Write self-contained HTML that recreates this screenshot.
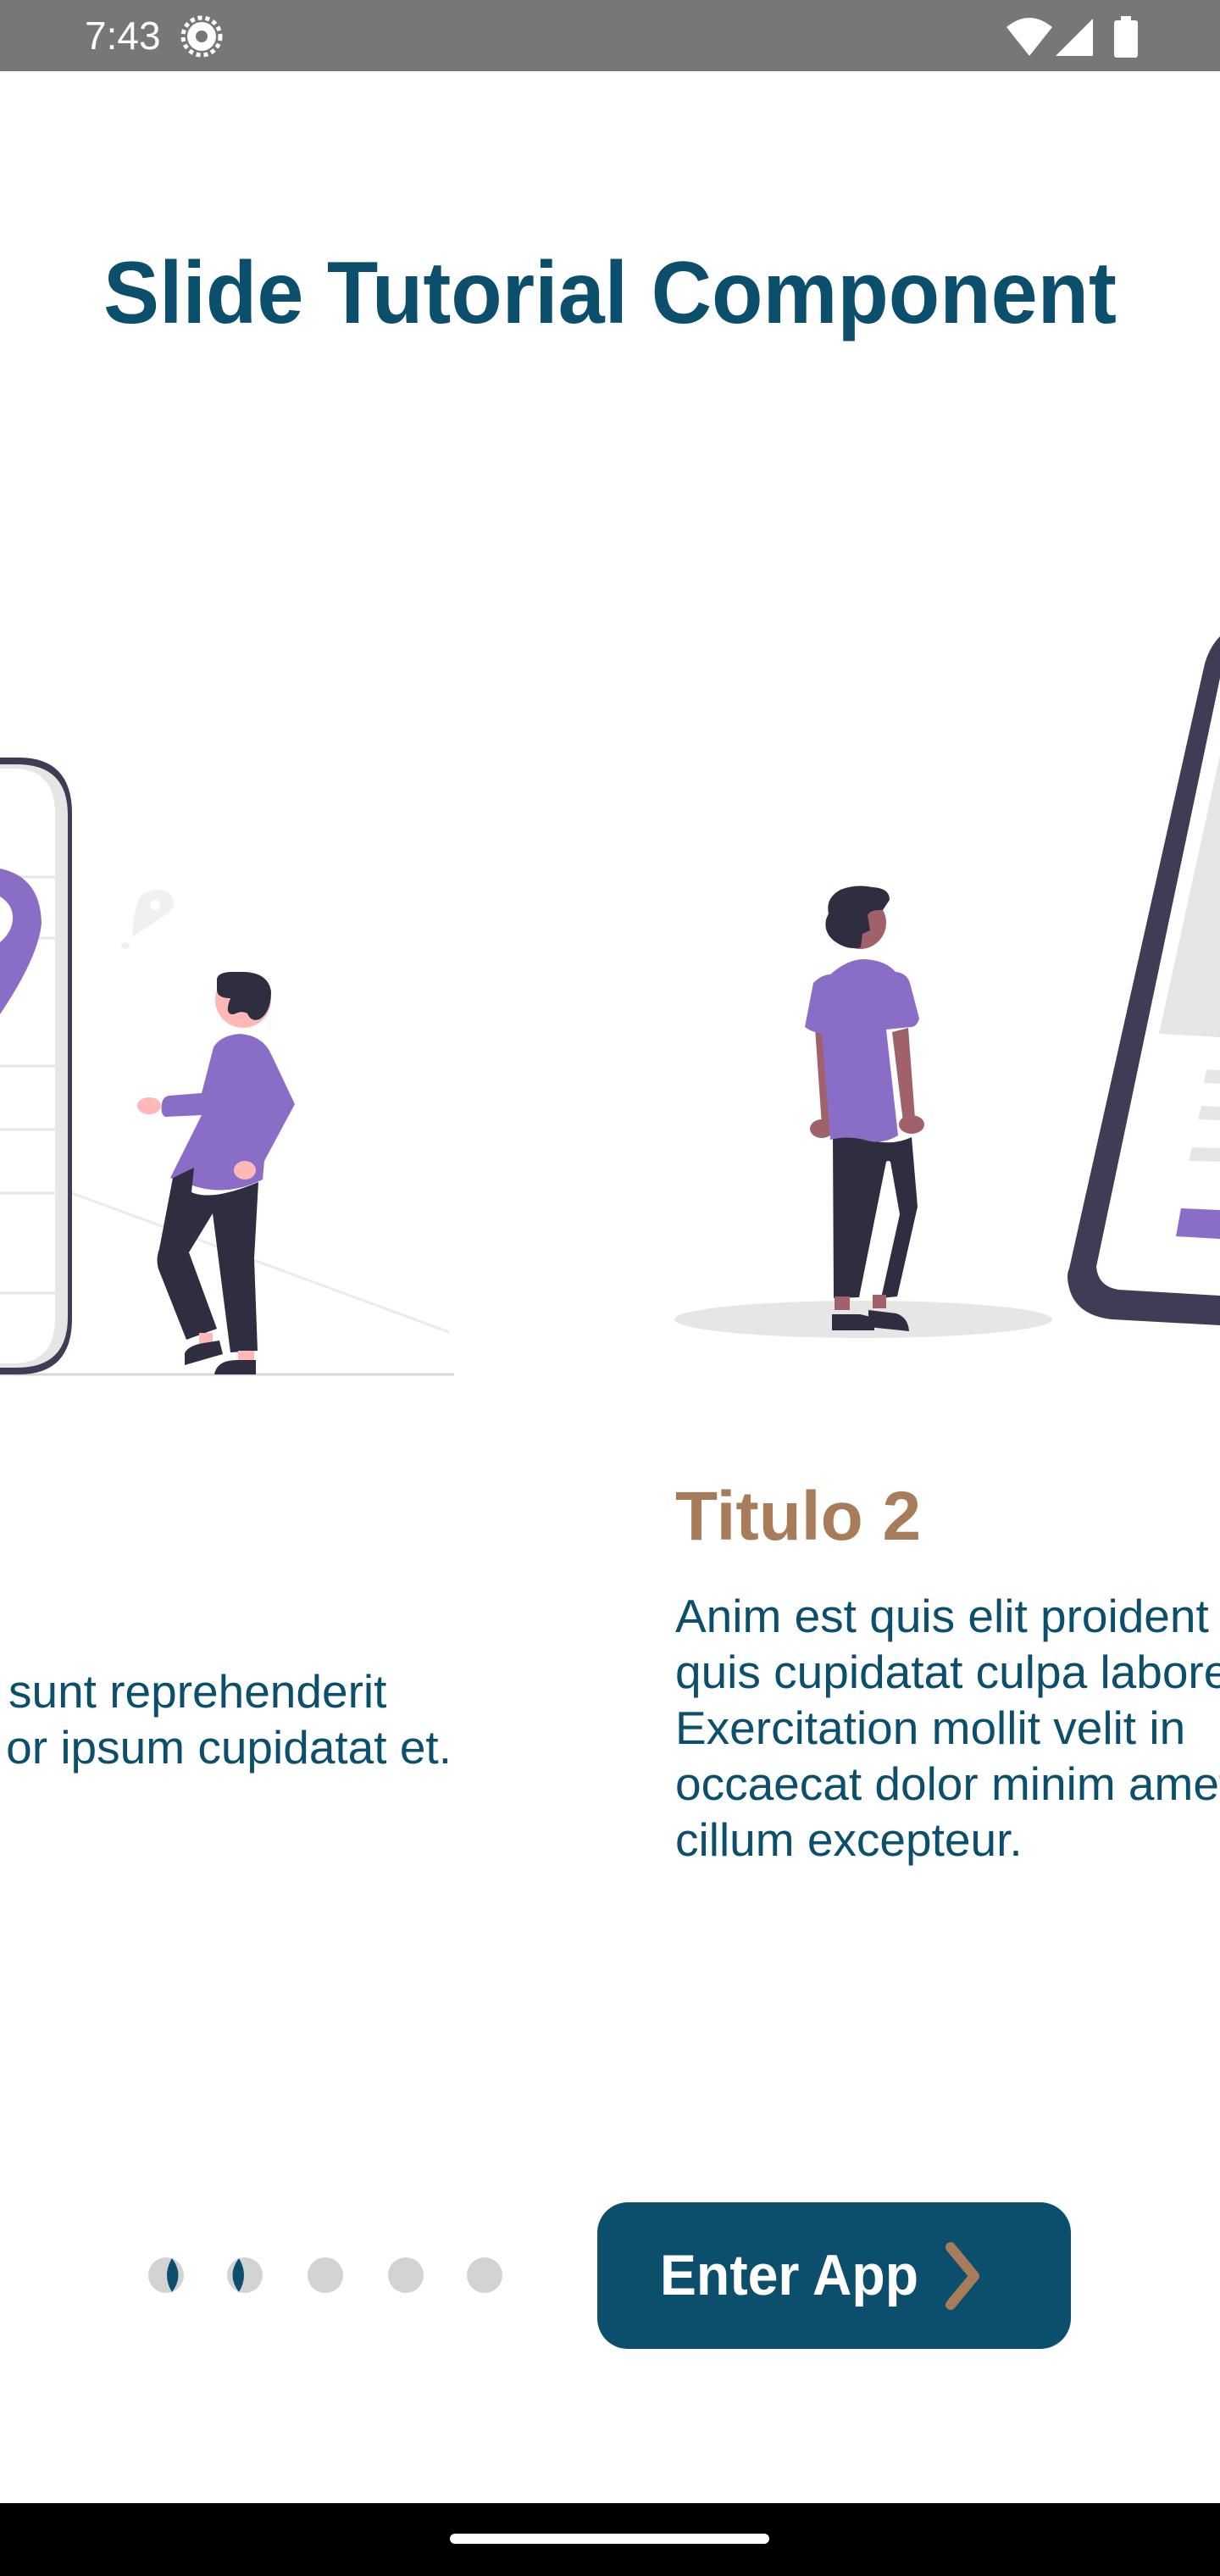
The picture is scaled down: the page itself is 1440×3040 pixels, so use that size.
<!DOCTYPE html>
<html><head><meta charset="utf-8"><style>
html,body{margin:0;padding:0;width:1440px;height:3040px;overflow:hidden;background:#fff;font-family:"Liberation Sans",sans-serif}
.abs{position:absolute}
.body{color:#0b4f6c;font-size:55px;line-height:66px;white-space:nowrap}
</style></head><body>
<div class="abs" style="left:0;top:0;width:1440px;height:84px;background:#777"></div>
<div class="abs" style="left:100px;top:16px;color:#fff;font-size:46px;line-height:52px">7:43</div>
<svg class="abs" style="left:0;top:0" width="1440" height="3040" viewBox="0 0 1440 3040">
  <g fill="#fff">
    <circle cx="238" cy="43" r="17"/>
    <circle cx="238" cy="43" r="22" fill="none" stroke="#fff" stroke-width="5" stroke-dasharray="5 4"/>
    <circle cx="238" cy="43" r="7" fill="#777"/>
    <path d="M1188 32 Q1215 10 1242 32 L1215 66 Z"/>
    <path d="M1246 66 L1290 22 L1290 66 Z"/>
    <rect x="1315" y="24" width="28" height="44" rx="3"/>
    <rect x="1323" y="19" width="12" height="6"/>
  </g>
  <text x="720" y="381" text-anchor="middle" textLength="1196" lengthAdjust="spacingAndGlyphs" font-family="Liberation Sans, sans-serif" font-weight="bold" font-size="104" fill="#0b4f6c">Slide Tutorial Component</text>

  <line x1="85" y1="1408" x2="530" y2="1572" stroke="#ebebeb" stroke-width="3"/>
  <line x1="0" y1="1622" x2="536" y2="1622" stroke="#d6d6d6" stroke-width="3"/>
  <path d="M0 894 L22 894 Q85 894 85 960 L85 1556 Q85 1622 22 1622 L0 1622 Z" fill="#3f3d56"/>
  <path d="M0 902 L20 902 Q80 902 80 962 L80 1554 Q80 1614 20 1614 L0 1614 Z" fill="#e6e6e6"/>
  <path d="M0 907 L15 907 Q65 907 65 960 L65 1556 Q65 1609 15 1609 L0 1609 Z" fill="#fff"/>
  <g stroke="#e6e6e6" stroke-width="3">
    <line x1="0" y1="1035" x2="65" y2="1035"/><line x1="0" y1="1107" x2="65" y2="1107"/>
    <line x1="0" y1="1258" x2="65" y2="1258"/><line x1="0" y1="1333" x2="65" y2="1333"/>
    <line x1="0" y1="1408" x2="65" y2="1408"/><line x1="0" y1="1526" x2="65" y2="1526"/>
  </g>
  <path d="M0 1025 Q48 1035 49 1090 Q45 1130 0 1197 Z" fill="#8a6dc6"/>
  <path d="M0 1058 Q16 1068 15 1085 Q14 1100 0 1112 Z" fill="#fff"/>
  <path d="M156 1106 Q158 1065 168 1056 Q185 1044 200 1055 Q212 1068 195 1080 Q180 1090 156 1106Z" fill="#f0f0f0"/>
  <circle cx="183" cy="1068" r="6" fill="#fff"/>
  <ellipse cx="148" cy="1116" rx="5" ry="4" fill="#f0f0f0"/>
  <circle cx="287" cy="1180" r="33" fill="#ffb8b8"/>
  <path d="M256 1155 Q258 1146 280 1147 Q316 1145 320 1170 Q320 1195 306 1203 Q296 1206 292 1196 Q285 1192 276 1197 Q264 1198 272 1178 Q256 1178 256 1168Z" fill="#2f2e41"/>
  <path d="M252 1236 Q260 1222 283 1220 Q310 1222 320 1244 L348 1303 L312 1370 L310 1392 Q270 1412 230 1400 L201 1390 L238 1316 L195 1318 Q189 1315 191 1303 Q192 1294 200 1293 L238 1290 Z" fill="#8a6dc6"/>
  <ellipse cx="176" cy="1305" rx="14" ry="10" fill="#ffb8b8"/>
  <ellipse cx="289" cy="1381" rx="13" ry="11" fill="#ffb8b8"/>
  <path d="M204 1390 L229 1378 L226 1407 Q250 1418 305 1395 L300 1485 L304 1594 L272 1596 L251 1432 L223 1478 L256 1568 L220 1581 L188 1500 Q183 1488 188 1474 Z" fill="#2f2e41"/>
  <rect x="235" y="1573" width="16" height="14" fill="#ffb8b8"/>
  <rect x="281" y="1594" width="19" height="12" fill="#ffb8b8"/>
  <path d="M218 1597 Q222 1588 240 1585 L259 1582 L263 1598 L218 1611Z" fill="#2f2e41"/>
  <path d="M253 1622 Q256 1605 280 1605 L302 1605 L302 1622Z" fill="#2f2e41"/>

  <ellipse cx="1019" cy="1557" rx="223" ry="22" fill="#e6e6e6"/>
  <path d="M962 1213 L980 1212 L984 1325 L970 1328 Z" fill="#a0616a"/>
  <path d="M1072 1213 L1080 1320 L1066 1324 L1053 1218Z" fill="#a0616a"/>
  <ellipse cx="970" cy="1332" rx="14" ry="11" fill="#a0616a"/>
  <ellipse cx="1076" cy="1327" rx="15" ry="11" fill="#a0616a"/>
  <path d="M983 1340 Q1010 1338 1030 1346 Q1055 1352 1076 1342 L1083 1424 L1059 1530 L1040 1532 L1062 1433 L1051 1371 Q1048 1369 1046 1371 L1014 1531 L984 1532 Z" fill="#2f2e41"/>
  <rect x="985" y="1530" width="18" height="16" fill="#a0616a"/>
  <rect x="1030" y="1528" width="16" height="16" fill="#a0616a"/>
  <path d="M982 1551 L1015 1551 L1032 1555 L1032 1570 L982 1570Z" fill="#2f2e41"/>
  <path d="M1025 1546 L1058 1550 Q1072 1555 1073 1571 L1025 1566Z" fill="#2f2e41"/>
  <circle cx="1015" cy="1089" r="31" fill="#a0616a"/>
  <path d="M978 1078 Q974 1060 992 1050 Q1010 1043 1030 1047 Q1050 1048 1050 1062 L1042 1074 Q1028 1073 1024 1080 L1027 1098 L1018 1102 L1016 1118 Q1000 1122 984 1110 Q972 1100 975 1085Z" fill="#2f2e41"/>
  <path d="M960 1160 Q970 1150 980 1150 Q1000 1132 1020 1132 Q1045 1133 1057 1147 Q1070 1148 1074 1160 L1085 1202 Q1082 1212 1075 1212 L1046 1215 L1060 1340 Q1040 1352 1020 1345 Q1000 1340 980 1345 L970 1220 Q958 1218 950 1212 Z" fill="#8a6dc6"/>
  <path d="M1440 751 L1440 1564 L1312 1557 Q1270 1552 1262 1520 Q1258 1505 1262 1497 L1422 783 Q1428 763 1440 751Z" fill="#3f3d56"/>
  <path d="M1440 800 L1440 1529 L1320 1522 Q1296 1518 1294 1495 L1440 800Z" fill="#fff"/>
  <path d="M1440 891 L1440 1224 L1368 1220 Z" fill="#e6e6e6"/>
  <g fill="#e6e6e6">
    <path d="M1424 1262 L1440 1263 L1440 1279 L1421 1278Z"/>
    <path d="M1418 1305 L1440 1306 L1440 1322 L1414 1321Z"/>
    <path d="M1407 1354 L1440 1355 L1440 1371 L1403 1370Z"/>
  </g>
  <path d="M1394 1426 L1440 1428 L1440 1462 L1388 1459Z" fill="#8a6dc6"/>

  <g fill="#d3d3d3">
    <circle cx="196" cy="2685" r="21"/><circle cx="289" cy="2685" r="21"/>
    <circle cx="384" cy="2685" r="21"/><circle cx="479" cy="2685" r="21"/><circle cx="572" cy="2685" r="21"/>
  </g>
  <path d="M203 2665 Q218 2685 203 2705 Q191 2685 203 2665Z" fill="#0b4f6c"/>
  <path d="M282 2665 Q267 2685 282 2705 Q294 2685 282 2665Z" fill="#0b4f6c"/>

  <rect x="705" y="2599" width="559" height="173" rx="36" fill="#0b4f6c"/>
  <text x="779" y="2708" textLength="305" lengthAdjust="spacingAndGlyphs" font-family="Liberation Sans, sans-serif" font-weight="bold" font-size="68" fill="#fff">Enter App</text>
  <path d="M1122 2652 L1150 2686 L1122 2720" fill="none" stroke="#a67c5b" stroke-width="12" stroke-linecap="round" stroke-linejoin="round"/>

  <rect x="0" y="2954" width="1440" height="86" fill="#000"/>
  <rect x="531" y="2990" width="377" height="12" rx="6" fill="#fff"/>
</svg>

<div class="abs body" style="left:10px;top:1963px">sunt reprehenderit</div>
<div class="abs body" style="left:0;top:2029px;width:533px;text-align:right">or ipsum cupidatat et.</div>
<div class="abs" style="left:797px;top:1742px;color:#a67c5b;font-size:82px;font-weight:bold;line-height:96px">Titulo 2</div>
<div class="abs body" style="left:797px;top:1874px">Anim est quis elit proident<br>quis cupidatat culpa labore<br>Exercitation mollit velit in<br>occaecat dolor minim amet<br>cillum excepteur.</div>
</body></html>
